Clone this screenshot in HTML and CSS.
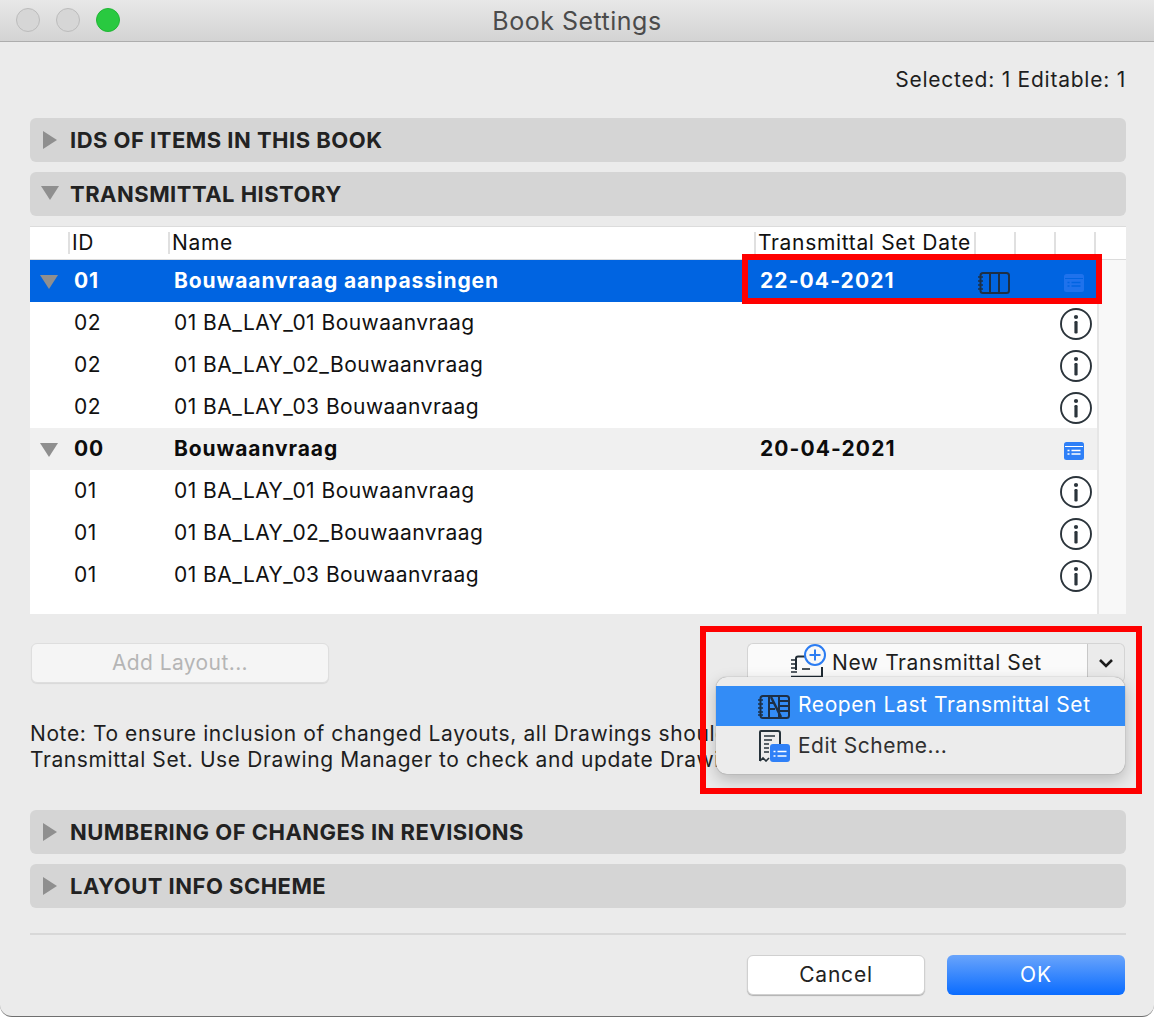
FILE: index.html
```html
<!DOCTYPE html>
<html lang="en">
<head>
<meta charset="utf-8">
<title>Book Settings</title>
<link rel="stylesheet" href="styles.css">
</head>
<body>
<svg class="defs" width="0" height="0" aria-hidden="true">
  <defs>
    <symbol id="info" viewBox="0 0 32 32">
      <circle cx="16" cy="16" r="15" fill="#fff" stroke="#2b343b" stroke-width="1.9"/>
      <circle cx="16" cy="9" r="2.1" fill="#2b343b"/>
      <rect x="14.4" y="13" width="3.2" height="12.5" rx="1.2" fill="#2b343b"/>
    </symbol>
    <symbol id="scheme" viewBox="0 0 20 18">
      <rect width="20" height="18" rx="2.5" fill="currentColor"/>
      <path d="M1 4.5h18" stroke="var(--inner)" stroke-width="1"/>
      <path d="M3.5 8.5h2M3.5 12h2M7.5 8.5h9M7.5 12h9" stroke="var(--inner)" stroke-width="1.6"/>
    </symbol>
  </defs>
</svg>
<div class="window">
  <header class="titlebar">
    <div class="lights">
      <span class="light"></span>
      <span class="light"></span>
      <span class="light light-green"></span>
    </div>
    <h1 class="title">Book Settings</h1>
  </header>

  <main class="content">
    <p class="status">Selected: 1 Editable: 1</p>

    <div class="section">
      <span class="tri tri-right"></span><span class="section-title">IDS OF ITEMS IN THIS BOOK</span>
    </div>
    <div class="section">
      <span class="tri tri-down"></span><span class="section-title">TRANSMITTAL HISTORY</span>
    </div>

    <div class="table">
      <div class="thead">
        <span class="th th-id">ID</span>
        <span class="th th-name">Name</span>
        <span class="th th-date">Transmittal Set Date</span>
        <span class="th th-a"></span>
        <span class="th th-b"></span>
        <span class="th th-c"></span>
      </div>
      <div class="tbody">
        <div class="rows">
          <div class="row row-selected">
            <span class="cell-tri"><span class="tri tri-down"></span></span>
            <span class="cell-id">01</span>
            <span class="cell-name">Bouwaanvraag aanpassingen</span>
            <span class="cell-date">22-04-2021</span>
            <span class="cell-book">
              <svg width="32" height="22" viewBox="0 0 32 22" fill="none" stroke="#1d2f45" stroke-width="2">
                <rect x="2.5" y="1" width="28.5" height="20" rx="2.5"/>
                <path d="M12 1v20M21 1v20"/>
                <path d="M0 5h5M0 9h5M0 13h5M0 17h5" stroke-width="1.5"/>
              </svg>
            </span>
            <span class="cell-icon"><svg class="scheme scheme-dim" width="20" height="18"><use href="#scheme"/></svg></span>
          </div>
          <div class="row">
            <span class="cell-tri"></span><span class="cell-id">02</span>
            <span class="cell-name">01 BA_LAY_01 Bouwaanvraag</span>
            <span class="cell-date"></span><span class="cell-book"></span>
            <span class="cell-icon"><svg class="info" width="32" height="32"><use href="#info"/></svg></span>
          </div>
          <div class="row">
            <span class="cell-tri"></span><span class="cell-id">02</span>
            <span class="cell-name">01 BA_LAY_02_Bouwaanvraag</span>
            <span class="cell-date"></span><span class="cell-book"></span>
            <span class="cell-icon"><svg class="info" width="32" height="32"><use href="#info"/></svg></span>
          </div>
          <div class="row">
            <span class="cell-tri"></span><span class="cell-id">02</span>
            <span class="cell-name">01 BA_LAY_03 Bouwaanvraag</span>
            <span class="cell-date"></span><span class="cell-book"></span>
            <span class="cell-icon"><svg class="info" width="32" height="32"><use href="#info"/></svg></span>
          </div>
          <div class="row row-group">
            <span class="cell-tri"><span class="tri tri-down"></span></span>
            <span class="cell-id">00</span>
            <span class="cell-name">Bouwaanvraag</span>
            <span class="cell-date">20-04-2021</span>
            <span class="cell-book"></span>
            <span class="cell-icon"><svg class="scheme" width="20" height="18"><use href="#scheme"/></svg></span>
          </div>
          <div class="row">
            <span class="cell-tri"></span><span class="cell-id">01</span>
            <span class="cell-name">01 BA_LAY_01 Bouwaanvraag</span>
            <span class="cell-date"></span><span class="cell-book"></span>
            <span class="cell-icon"><svg class="info" width="32" height="32"><use href="#info"/></svg></span>
          </div>
          <div class="row">
            <span class="cell-tri"></span><span class="cell-id">01</span>
            <span class="cell-name">01 BA_LAY_02_Bouwaanvraag</span>
            <span class="cell-date"></span><span class="cell-book"></span>
            <span class="cell-icon"><svg class="info" width="32" height="32"><use href="#info"/></svg></span>
          </div>
          <div class="row">
            <span class="cell-tri"></span><span class="cell-id">01</span>
            <span class="cell-name">01 BA_LAY_03 Bouwaanvraag</span>
            <span class="cell-date"></span><span class="cell-book"></span>
            <span class="cell-icon"><svg class="info" width="32" height="32"><use href="#info"/></svg></span>
          </div>
        </div>
        <div class="scrolltrack"></div>
      </div>
    </div>

    <div class="actions">
      <button class="btn btn-disabled" type="button">Add Layout...</button>
      <div class="split">
        <button class="btn btn-main" type="button">
          <svg class="new-icon" width="38" height="34" viewBox="0 0 38 34" fill="none">
            <path d="M17 12.5H9Q7 12.5 7 14.5V26" stroke="#1f2a33" stroke-width="2"/>
            <path d="M2 32.8H33V23" stroke="#1f2a33" stroke-width="2"/>
            <path d="M2 16h6M2 20h6M2 24h6M2 28h6" stroke="#1f2a33" stroke-width="1.6"/>
            <path d="M13 25h8" stroke="#1f2a33" stroke-width="1.6"/>
            <circle cx="26" cy="11" r="10" fill="#f8f8f8" stroke="#2b7cf2" stroke-width="2"/>
            <path d="M26 5.5v11M20.5 11h11" stroke="#2b7cf2" stroke-width="2"/>
          </svg>
          <span>New Transmittal Set</span>
        </button>
        <button class="btn btn-arrow" type="button" aria-label="More">
          <svg width="16" height="10" viewBox="0 0 16 10" fill="none"><path d="M2 2l6 6 6-6" stroke="#1c1c1c" stroke-width="2.6"/></svg>
        </button>
      </div>
      <div class="menu">
        <div class="menu-item menu-item-active">
          <svg class="menu-icon" width="32" height="24" viewBox="0 0 32 24" fill="none" stroke="#1d2f45" stroke-width="2">
            <rect x="2.5" y="1" width="28.5" height="22" rx="2.5"/>
            <path d="M0 5h5M0 9h5M0 13h5M0 17h5M0 20h5" stroke-width="1.5"/>
            <path d="M11 1v22M21 1v22M21 6h10M21 11h10M21 16h10M11 8h5M11 14h6"/>
            <path d="M13 2l10 20" stroke-width="2.5"/>
          </svg>
          <span>Reopen Last Transmittal Set</span>
        </div>
        <div class="menu-item">
          <svg class="menu-icon menu-icon-edit" width="34" height="32" viewBox="0 0 34 32" fill="none">
            <path d="M2 31V2Q2 1 3 1H20Q22 1 22 3V15" stroke="#26323a" stroke-width="2"/>
            <path d="M2 31l3-3 3 3 3-3" stroke="#26323a" stroke-width="1.6"/>
            <path d="M6 6h11M6 10h8M6 14h5M6 18h5M6 22h5" stroke="#26323a" stroke-width="1.6"/>
            <rect x="12" y="14" width="20" height="18" rx="3" fill="#2f80f7"/>
            <path d="M15.5 21.5h2M15.5 26h2M19.5 21.5h9M19.5 26h9" stroke="#fff" stroke-width="1.6"/>
          </svg>
          <span>Edit Scheme...</span>
        </div>
      </div>
    </div>

    <p class="note">Note: To ensure inclusion of changed Layouts, all Drawings should<br>Transmittal Set. Use Drawing Manager to check and update Drawings</p>

    <div class="section">
      <span class="tri tri-right"></span><span class="section-title">NUMBERING OF CHANGES IN REVISIONS</span>
    </div>
    <div class="section">
      <span class="tri tri-right"></span><span class="section-title">LAYOUT INFO SCHEME</span>
    </div>

    <hr class="divider">

    <footer class="footer">
      <button class="btn btn-cancel" type="button">Cancel</button>
      <button class="btn btn-ok" type="button">OK</button>
    </footer>
  </main>

  <div class="mark mark-row"></div>
  <div class="mark mark-menu"></div>
</div>
</body>
</html>
```
FILE: styles.css
```css
* { box-sizing: border-box; }
html, body { margin: 0; padding: 0; background: #fff; }
body {
  width: 1154px;
  height: 1018px;
  overflow: hidden;
  font-family: Inter, "Liberation Sans", sans-serif;
  font-size: 21px;
  color: #1e1e1e;
}
.defs { position: absolute; }

.window {
  position: relative;
  height: 1017px;
  background: #ebebeb;
  border-bottom: 1px solid #6f6f6f;
  border-radius: 0 0 12px 12px;
  overflow: hidden;
}

.titlebar {
  position: relative;
  display: flex;
  align-items: center;
  justify-content: center;
  height: 42px;
  background: linear-gradient(#e8e8e8, #d3d3d3);
  border-bottom: 1px solid #adadad;
}
.lights {
  position: absolute;
  left: 16px;
  top: 8px;
  display: flex;
  gap: 16px;
}
.light {
  width: 24px;
  height: 24px;
  border-radius: 50%;
  background: #d6d6d6;
  border: 1px solid #bcbcbc;
}
.light-green { background: #29c940; border-color: #20b634; }
.title {
  margin: 0;
  font-size: 25px;
  font-weight: 400;
  letter-spacing: .5px;
  color: #4b4b4b;
}

.content { padding: 0 28px 0 30px; }
.status {
  margin: 25px 0 25px;
  line-height: 26px;
  text-align: right;
  letter-spacing: .76px;
}

.section {
  display: flex;
  align-items: center;
  height: 44px;
  margin-bottom: 10px;
  background: #d5d5d5;
  border-radius: 6px;
  position: relative;
}
.section-title {
  margin-left: 40px;
  font-size: 22px;
  font-weight: 700;
  letter-spacing: .48px;
  color: #222;
}
.tri { display: block; width: 0; height: 0; }
.tri-right {
  position: absolute;
  left: 13px;
  top: 13px;
  border-left: 14px solid #8f8f8f;
  border-top: 9px solid transparent;
  border-bottom: 9px solid transparent;
}
.tri-down {
  position: absolute;
  left: 11px;
  top: 14px;
  border-top: 14px solid #8f8f8f;
  border-left: 9px solid transparent;
  border-right: 9px solid transparent;
}

.table { background: #fff; height: 388px; }
.thead {
  display: flex;
  height: 34px;
  border-top: 1px solid #dcdcdc;
  border-bottom: 1px solid #dcdcdc;
  padding-left: 38px;
  padding-top: 5px;
}
.th {
  height: 22px;
  line-height: 22px;
  padding-left: 2px;
  border-left: 2px solid #e0e0e0;
  color: #111;
  letter-spacing: .67px;
  white-space: nowrap;
}
.th-id { width: 100px; }
.th-name { width: 586px; }
.th-date { width: 220px; }
.th-a, .th-b { width: 40px; }
.th-c { width: 42px; border-right: 2px solid #e0e0e0; }

.tbody { display: flex; height: 354px; }
.rows { width: 1067px; }
.scrolltrack {
  flex: 1;
  background: #f8f8f8;
  border-left: 2px solid #e6e6e6;
}
.row {
  position: relative;
  display: flex;
  align-items: center;
  height: 42px;
  letter-spacing: .45px;
  color: #111;
  white-space: nowrap;
}
.row-selected { background: #0064e1; color: #fff; font-weight: 700; letter-spacing: .9px; }
.row-group { background: #f0f0f0; color: #0c0c0c; font-weight: 700; letter-spacing: .9px; }
.cell-tri { width: 44px; }
.cell-tri .tri { left: 10px; top: 15px; }
.cell-id { width: 100px; margin-top: -2px; }
.cell-name { width: 586px; margin-top: -2px; }
.cell-date { width: 218px; margin-top: -2px; letter-spacing: 1.1px; }
.cell-book { display: flex; width: 82px; padding-top: 3px; }
.cell-icon { display: flex; justify-content: center; width: 32px; }
.scheme { color: #2f80f7; --inner: #fff; margin: 4px 4px 0 0; }
.scheme-dim { color: #1f72ec; --inner: #0064e1; }
.info { margin-top: 2px; }

.actions {
  position: relative;
  display: flex;
  justify-content: space-between;
  height: 40px;
  margin-top: 29px;
  padding-left: 1px;
  padding-right: 1px;
}
.btn {
  font-family: inherit;
  font-size: 21px;
  letter-spacing: .4px;
  border-radius: 6px;
  padding: 0 0 2px;
}
.btn-disabled {
  width: 298px;
  background: #f5f5f5;
  border: 1px solid #dedede;
  box-shadow: 0 1px 1px rgba(0,0,0,.08);
  color: #b5b5b5;
}
.split { display: flex; }
.btn-main {
  display: flex;
  align-items: center;
  width: 341px;
  padding-left: 84px;
  position: relative;
  background: #fafafa;
  border: 1px solid #d4d4d4;
  border-right: 1px solid #c8c8c8;
  border-radius: 6px 0 0 6px;
  color: #1e1e1e;
  letter-spacing: .59px;
}
.new-icon { position: absolute; left: 41px; top: 0; }
.btn-arrow {
  width: 37px;
  background: #ebebeb;
  border: 1px solid #d4d4d4;
  border-left: 0;
  border-radius: 0 6px 6px 0;
  padding-bottom: 6px;
}

.menu {
  position: absolute;
  left: 686px;
  top: 34px;
  width: 409px;
  padding: 9px 0 8px;
  background: #ececec;
  border-radius: 11px;
  box-shadow: 0 0 1px rgba(0,0,0,.5), 0 6px 16px rgba(0,0,0,.22);
  z-index: 2;
}
.menu-item {
  position: relative;
  display: flex;
  align-items: center;
  height: 40px;
  padding-left: 82px;
  padding-bottom: 2px;
  letter-spacing: .5px;
  color: #303030;
}
.menu-item-active { background: #338cf6; color: #fff; letter-spacing: .59px; padding-bottom: 4px; }
.menu-icon { position: absolute; left: 42px; top: 9px; }
.menu-icon-edit { left: 42px; top: 4px; }

.note {
  margin: 38px 0 37px;
  line-height: 26px;
  letter-spacing: .6px;
  white-space: nowrap;
  color: #1e1e1e;
}

.divider {
  margin: 25px 0 0;
  height: 2px;
  border: 0;
  background: #d8d8d8;
}

.footer {
  display: flex;
  justify-content: flex-end;
  gap: 22px;
  margin-top: 20px;
  padding-right: 1px;
}
.btn-cancel, .btn-ok { width: 178px; height: 40px; letter-spacing: .8px; }
.btn-cancel {
  background: #fff;
  border: 1px solid #d0d0d0;
  box-shadow: 0 1px 1px rgba(0,0,0,.25);
  color: #222;
}
.btn-ok {
  background: linear-gradient(#69a4fb, #0a6cff);
  border: 0;
  color: #fff;
}

.mark {
  position: absolute;
  border: 6px solid #fe0000;
  z-index: 3;
}
.mark-row { left: 742px; top: 254px; width: 360px; height: 50px; }
.mark-menu { left: 700px; top: 626px; width: 442px; height: 168px; }
```
